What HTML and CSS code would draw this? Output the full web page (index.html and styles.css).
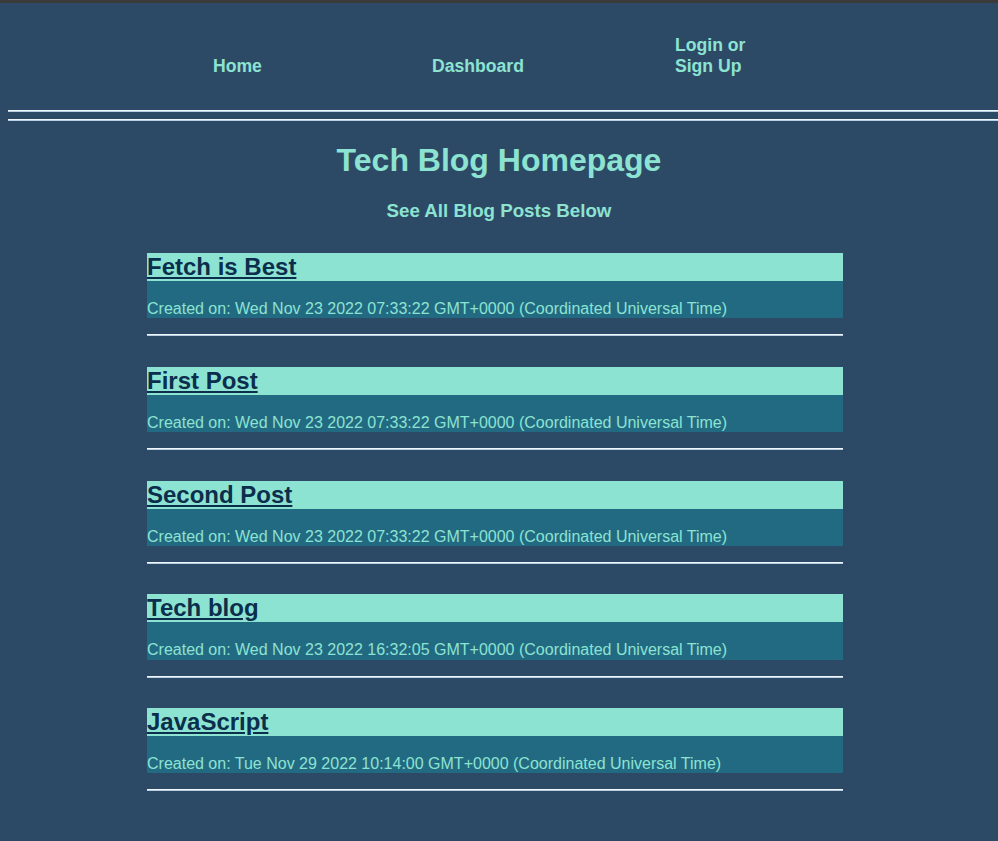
FILE: index.html
```html
<!DOCTYPE html>
<html lang="en">
<head>
<meta charset="utf-8">
<title>Tech Blog</title>
<link rel="stylesheet" href="styles.css">
</head>
<body>
<div class="topbar"></div>
<div class="page">
  <header class="header">
    <nav class="nav">
      <a class="nav-link" href="#">Home</a>
      <a class="nav-link" href="#">Dashboard</a>
      <a class="nav-link nav-login" href="#">Login or Sign Up</a>
    </nav>
    <hr class="rule rule-first">
    <hr class="rule rule-second">
  </header>
  <main class="main">
    <h1 class="title">Tech Blog Homepage</h1>
    <h3 class="subtitle">See All Blog Posts Below</h3>
    <section class="posts">
      <article class="post">
        <h2 class="post-title"><a href="#">Fetch is Best</a></h2>
        <p class="post-meta">Created on: Wed Nov 23 2022 07:33:22 GMT+0000 (Coordinated Universal Time)</p>
        <hr class="post-rule">
      </article>
      <article class="post">
        <h2 class="post-title"><a href="#">First Post</a></h2>
        <p class="post-meta">Created on: Wed Nov 23 2022 07:33:22 GMT+0000 (Coordinated Universal Time)</p>
        <hr class="post-rule">
      </article>
      <article class="post">
        <h2 class="post-title"><a href="#">Second Post</a></h2>
        <p class="post-meta">Created on: Wed Nov 23 2022 07:33:22 GMT+0000 (Coordinated Universal Time)</p>
        <hr class="post-rule">
      </article>
      <article class="post">
        <h2 class="post-title"><a href="#">Tech blog</a></h2>
        <p class="post-meta">Created on: Wed Nov 23 2022 16:32:05 GMT+0000 (Coordinated Universal Time)</p>
        <hr class="post-rule">
      </article>
      <article class="post">
        <h2 class="post-title"><a href="#">JavaScript</a></h2>
        <p class="post-meta">Created on: Tue Nov 29 2022 10:14:00 GMT+0000 (Coordinated Universal Time)</p>
        <hr class="post-rule">
      </article>
    </section>
  </main>
</div>
</body>
</html>
```
FILE: styles.css
```css
html, body {
  margin: 0;
  padding: 0;
  background: #2c4a66;
  font-family: "Liberation Sans", Arial, sans-serif;
  color: #8de3d1;
  overflow: hidden;
}

.topbar {
  height: 3px;
  background: #3a3a3a;
}

.page {
  padding: 0 0 40px 8px;
}

.header {
  padding-top: 32px;
}

.nav {
  display: grid;
  grid-template-columns: 219px 243px 80px;
  align-items: end;
  padding-left: 205px;
}

.nav-link {
  color: #8de3d1;
  text-decoration: none;
  font-weight: bold;
  font-size: 17.6px;
  line-height: 20.5px;
}

.rule {
  border: 0;
  height: 0;
  border-top: 1px solid #f2f6fa;
  border-bottom: 1px solid #b9cfe4;
  margin: 0;
}

.rule-first {
  margin-top: 34px;
}

.rule-second {
  margin-top: 7px;
}

.main {
  padding-top: 21px;
}

.title {
  margin: 0;
  text-align: center;
  font-size: 32px;
  line-height: 37px;
  font-weight: bold;
  color: #8de3d1;
  padding-right: 8px;
}

.subtitle {
  margin: 21px 0 0;
  text-align: center;
  font-size: 18.72px;
  line-height: 22px;
  font-weight: bold;
  color: #8de3d1;
  padding-right: 8px;
}

.posts {
  margin: 31px 0 0 139px;
  width: 696px;
  display: flex;
  flex-direction: column;
  gap: 30.35px;
}

.post-title {
  margin: 0;
  background: #8de3d1;
  font-size: 24px;
  line-height: 28px;
  font-weight: bold;
}

.post-title a {
  color: #0b2e4c;
  text-decoration: underline;
}

.post-meta {
  margin: 0;
  background: #226a82;
  padding-top: 19px;
  font-size: 16px;
  line-height: 18.4px;
  color: #8de3d1;
}

.post-rule {
  border: 0;
  height: 0;
  border-top: 1px solid #f2f6fa;
  border-bottom: 1px solid #b9cfe4;
  margin: 16px 0 0;
}
```
